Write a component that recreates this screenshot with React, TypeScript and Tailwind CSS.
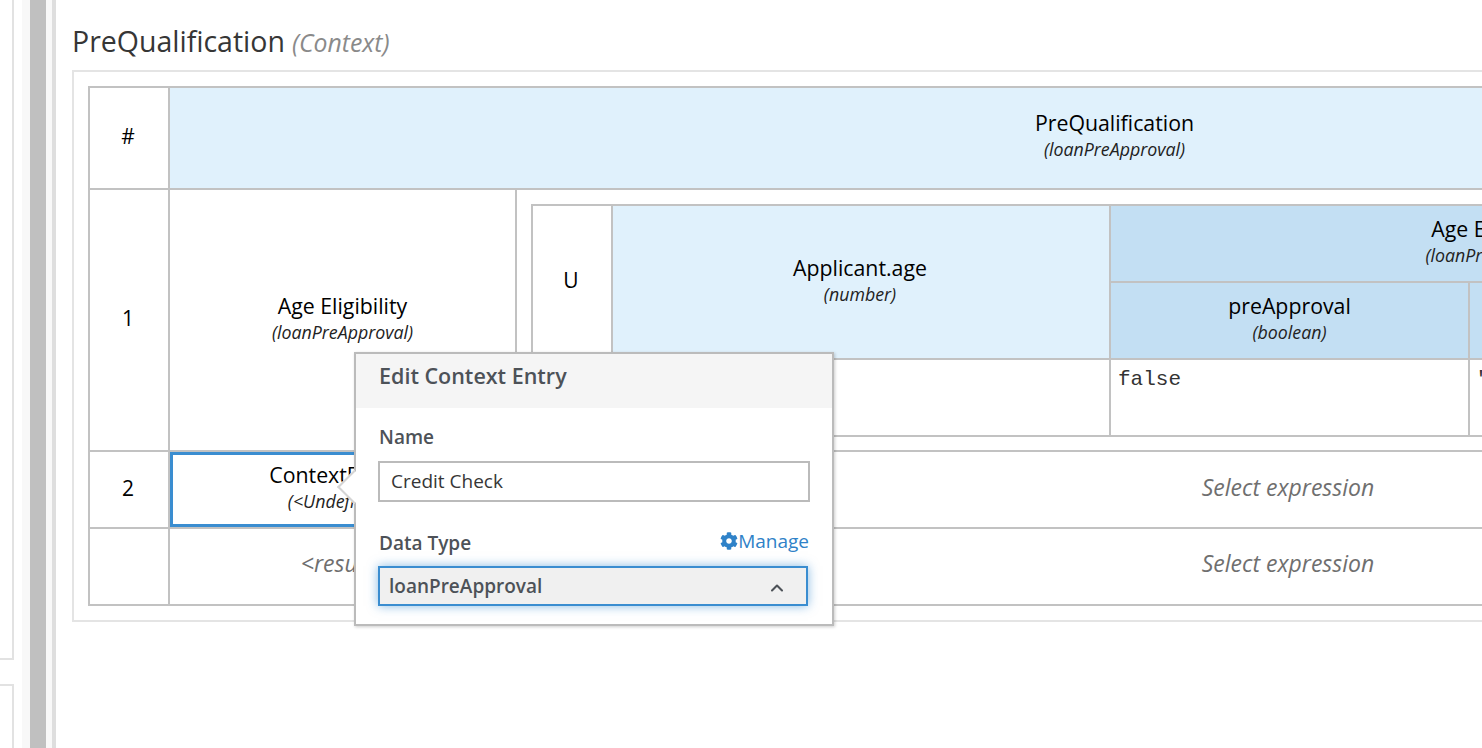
import React from 'react';
import { ChevronUp } from 'lucide-react';
import { FaCog } from 'react-icons/fa';

const font = "font-['Open_Sans',sans-serif]";

const Label = ({ name, type }: { name: string; type: string }) => (
  <div className="flex flex-col items-center justify-center text-center pb-[4px]">
    <span className="text-[21.3px] leading-[27px] text-black whitespace-nowrap">{name}</span>
    <span className="text-[17.8px] leading-[26px] italic text-[#222] whitespace-nowrap">{type}</span>
  </div>
);

const SelectExpression = ({ text, className = 'pb-[4px]' }: { text: string; className?: string }) => (
  <div className={`flex items-center justify-center text-[23px] italic text-[#6f6f6f] whitespace-nowrap ${className}`}>{text}</div>
);

const line = 'border-[#c2c2c2]';
const mono = "font-['Liberation_Mono',monospace] text-[21px] pl-[7px] pt-[8px] leading-[24px] text-[#333]";

const NestedTable = () => (
  <div className={`w-[1514px] h-[233px] border-2 ${line} grid grid-cols-[80px_498px_359px_413px_1fr] grid-rows-[77px_75px_1fr]`}>
    <div className={`row-span-2 flex items-center justify-center pb-[3px] pr-[2px] text-[21px] text-black border-r-2 ${line}`}>U</div>
    <div className={`row-span-2 bg-[#e0f1fc] border-r-2 ${line} pr-[2px] flex items-center justify-center`}>
      <Label name="Applicant.age" type="(number)" />
    </div>
    <div className={`col-span-2 bg-[#c3dff3] border-b-2 border-r-2 ${line} flex items-center justify-center`}>
      <Label name="Age Eligibility" type="(loanPreApproval)" />
    </div>
    <div className="row-span-3 bg-[#e0f1fc]" />
    <div className={`bg-[#c3dff3] border-r-2 ${line} flex items-center justify-center`}>
      <Label name="preApproval" type="(boolean)" />
    </div>
    <div className={`bg-[#c3dff3] border-r-2 ${line} flex items-center justify-center`}>
      <Label name="reason" type="(string)" />
    </div>
    <div className={`border-t-2 border-r-2 ${line} flex items-center justify-center text-[21px]`}>1</div>
    <div className={`border-t-2 border-r-2 ${line} ${mono}`} />
    <div className={`border-t-2 border-r-2 ${line} ${mono}`}>false</div>
    <div className={`border-t-2 border-r-2 ${line} ${mono}`}>"Too young"</div>
  </div>
);

const ContextTable = () => (
  <div className={`w-[1973px] h-[520px] border-2 ${line} grid grid-cols-[80px_347px_1fr] grid-rows-[100px_262px_77px_1fr]`}>
    <div className={`flex items-center justify-center pb-[2px] pr-[2px] text-[21px] text-black border-r-2 ${line}`}>#</div>
    <div className="col-span-2 bg-[#e0f1fc] flex items-center justify-center pb-[1px]">
      <Label name="PreQualification" type="(loanPreApproval)" />
    </div>

    <div className={`flex items-center justify-center pb-[2px] pr-[2px] text-[21px] text-black border-t-2 border-r-2 ${line}`}>1</div>
    <div className={`flex items-center justify-center border-t-2 border-r-2 ${line}`}>
      <Label name="Age Eligibility" type="(loanPreApproval)" />
    </div>
    <div className={`border-t-2 ${line} pl-[14px] pt-[14px]`}>
      <NestedTable />
    </div>

    <div className={`flex items-center justify-center pb-[1px] pr-[2px] text-[21px] text-black border-t-2 border-r-2 ${line}`}>2</div>
    <div className={`border-t-2 ${line}`}>
      <div className="h-full flex items-center justify-center border-[3px] border-[#3a8dd0]">
        <Label name="ContextEntry-1" type="(<Undefined>)" />
      </div>
    </div>
    <div className={`border-t-2 ${line} flex justify-center`}>
      <SelectExpression text="Select expression" />
    </div>

    <div className={`border-t-2 border-r-2 ${line}`} />
    <div className={`border-t-2 border-r-2 ${line} flex justify-center`}>
      <SelectExpression text="<result>" className="pb-[6px]" />
    </div>
    <div className={`border-t-2 ${line} flex justify-center`}>
      <SelectExpression text="Select expression" className="pb-[6px]" />
    </div>
  </div>
);

const EditPopover = () => (
  <div className="absolute left-[354px] top-[352px] w-[480px] h-[274px] bg-white border-2 border-[#bbbbbb] shadow-[1px_1px_3px_rgba(0,0,0,0.2)] z-10">
    {/* arrow */}
    <div className="absolute left-[-14px] top-[121px] w-[24px] h-[24px] rotate-45 bg-white border-b-2 border-l-2 border-[#d4d4d4]" />
    <div className="relative h-[54px] bg-[#f5f5f5] pl-[23px] pb-[10px] flex items-center text-[21.5px] font-semibold text-[#4d5258]">
      Edit Context Entry
    </div>
    <div className="relative px-[22px] pt-[17px]">
      <div className="pl-[1px] text-[19px] leading-[24px] font-semibold text-[#4d5258]">Name</div>
      <div className="mt-[12px] h-[41px] border-2 border-[#bbbbbb] flex items-center pl-[11px] text-[19px] text-[#363636]">
        Credit Check
      </div>
      <div className="mt-[27px] flex items-end justify-between">
        <span className="pl-[1px] text-[19px] leading-[24px] font-semibold text-[#4d5258]">Data Type</span>
        <span className="flex items-center pb-[2px] pr-[1px] text-[19px] leading-[24px] text-[#2f82c8]">
          <FaCog className="w-[18px] h-[18px]" />
          Manage
        </span>
      </div>
      <div className="mt-[11px] mr-[2px] h-[40px] border-2 border-[#3a8dd0] bg-[#f0f0f0] shadow-[0_0_10px_rgba(58,141,208,0.6)] flex items-center justify-between pl-[9px] pr-[19px] text-[19px] font-semibold text-[#4d5258]">
        loanPreApproval
        <ChevronUp className="mt-[4px] w-[20px] h-[20px] text-[#4d5258]" strokeWidth={2.5} />
      </div>
    </div>
  </div>
);

const App: React.FC = () => {
  return (
    <div className={`relative w-[1482px] h-[748px] overflow-hidden bg-white flex ${font}`}>
      {/* Left palette */}
      <div className="w-[14px] shrink-0 flex flex-col">
        <div className="h-[660px] border-r-2 border-b-2 border-[#e2e2e2]" />
        <div className="mt-[24px] flex-1 border-r-2 border-t-2 border-[#e2e2e2]" />
      </div>
      {/* Splitter */}
      <div className="ml-[8px] w-[8px] shrink-0 bg-[#f8f8f8]" />
      <div className="w-[16px] shrink-0 bg-[#c0c0c0]" />
      <div className="w-[6px] shrink-0 bg-[#f8f8f8]" />
      <div className="w-[4px] shrink-0 bg-[#dedede]" />

      {/* Editor */}
      <div className="flex-1 min-w-0 pl-[16px]">
        <div className="h-[70px] flex items-baseline pt-[22px] whitespace-nowrap">
          <span className="text-[28.5px] leading-[39px] text-[#363636]">PreQualification</span>
          <span className="ml-[7px] text-[24.8px] leading-[39px] italic text-[#8a8a8a]">(Context)</span>
        </div>
        <div className="w-[2010px] h-[552px] border-2 border-[#e4e4e4] pl-[14px] pt-[14px]">
          <ContextTable />
        </div>
      </div>

      <EditPopover />
    </div>
  );
};

export default App;
